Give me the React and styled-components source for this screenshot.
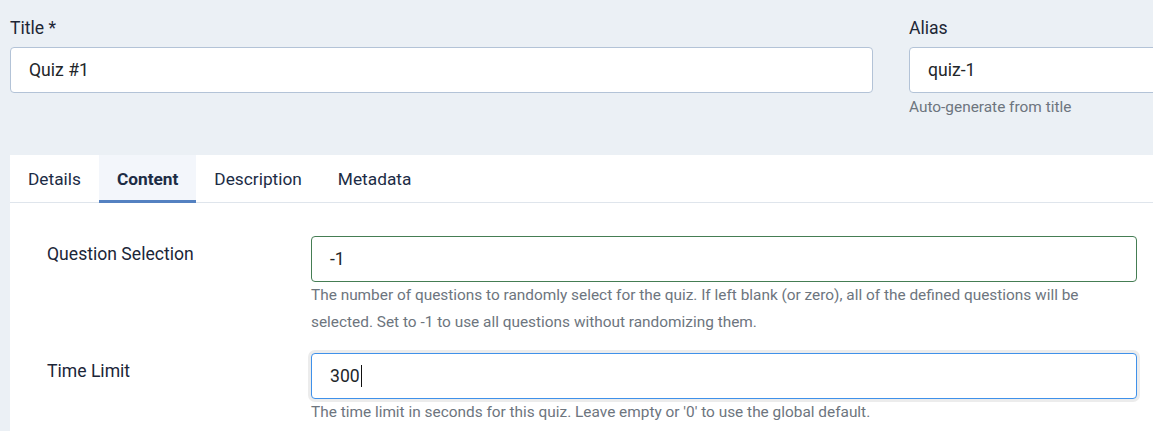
import styled, { createGlobalStyle, css } from "styled-components";

const GlobalStyle = createGlobalStyle`
  html, body {
    margin: 0;
    padding: 0;
    background: #ebf0f5;
    overflow: hidden;
  }
  body {
    font-family: Roboto, "Liberation Sans", sans-serif;
    color: #22262a;
  }
`;

const Page = styled.div`
  width: 1153px;
  height: 431px;
  padding-left: 10px;
  box-sizing: border-box;
`;

const TopRow = styled.div`
  display: grid;
  grid-template-columns: 863px 300px;
  column-gap: 36px;
  padding-top: 16px;
  height: 155px;
  box-sizing: border-box;
`;

const Group = styled.div`
  display: flex;
  flex-direction: column;
`;

const TopLabel = styled.label`
  font-size: 17.6px;
  line-height: 24px;
  color: #1d2635;
  margin-bottom: 7px;
`;

const Field = styled.div`
  height: 46px;
  box-sizing: border-box;
  display: flex;
  align-items: center;
  padding: 0 18px;
  background: #fff;
  border: 1px solid #b3c3d7;
  border-radius: 4px;
  font-size: 17.6px;
  color: #22262a;

  ${(p) =>
    p.$state === "valid" &&
    css`
      border-color: #457d54;
    `}

  ${(p) =>
    p.$state === "focus" &&
    css`
      border-color: #3f91ea;
      box-shadow: 0 0 0 3px #ececec;
    `}
`;

const Caret = styled.span`
  display: inline-block;
  width: 1px;
  height: 22px;
  background: #111;
  margin-left: 1px;
`;

const Hint = styled.div`
  font-size: 15.4px;
  color: #6d757e;
  line-height: ${(p) => (p.$tall ? "27px" : "20px")};
  margin-top: ${(p) => (p.$tall ? "0" : "4px")};
`;

const Card = styled.div`
  background: #fff;
  height: 290px;
`;

const TabBar = styled.div`
  display: flex;
  border-bottom: 1px solid #dfe5ec;
  height: 48px;
  box-sizing: border-box;
`;

const Tab = styled.div`
  padding: 0 18px;
  font-size: 17.3px;
  color: #1c2c45;
  display: flex;
  align-items: center;
  border-bottom: 3px solid transparent;
  padding-top: 3px;
  margin-bottom: -1px;

  ${(p) =>
    p.$active &&
    css`
      font-weight: 700;
      background: #f3f6fb;
      border-bottom-color: #5481c1;
    `}
`;

const Body = styled.div`
  padding: 33px 16px 0 37px;
`;

const Row = styled.div`
  display: grid;
  grid-template-columns: 264px 1fr;
  margin-bottom: 17px;
`;

const RowLabel = styled.label`
  font-size: 17.6px;
  line-height: 24px;
  padding-top: 6px;
  color: #1b2638;
`;

const Control = styled.div`
  display: flex;
  flex-direction: column;
`;

const tabs = ["Details", "Content", "Description", "Metadata"];

export default function App() {
  return (
    <>
      <GlobalStyle />
      <Page>
        <TopRow>
          <Group>
            <TopLabel>Title *</TopLabel>
            <Field>Quiz #1</Field>
          </Group>
          <Group>
            <TopLabel>Alias</TopLabel>
            <Field>quiz-1</Field>
            <Hint>Auto-generate from title</Hint>
          </Group>
        </TopRow>
        <Card>
          <TabBar>
            {tabs.map((t) => (
              <Tab key={t} $active={t === "Content"}>
                {t}
              </Tab>
            ))}
          </TabBar>
          <Body>
            <Row>
              <RowLabel>Question Selection</RowLabel>
              <Control>
                <Field $state="valid">-1</Field>
                <Hint $tall>
                  The number of questions to randomly select for the quiz. If
                  left blank (or zero), all of the defined questions will be
                  selected. Set to -1 to use all questions without randomizing
                  them.
                </Hint>
              </Control>
            </Row>
            <Row>
              <RowLabel>Time Limit</RowLabel>
              <Control>
                <Field $state="focus">
                  300
                  <Caret />
                </Field>
                <Hint $tall>
                  The time limit in seconds for this quiz. Leave empty or '0'
                  to use the global default.
                </Hint>
              </Control>
            </Row>
          </Body>
        </Card>
      </Page>
    </>
  );
}
